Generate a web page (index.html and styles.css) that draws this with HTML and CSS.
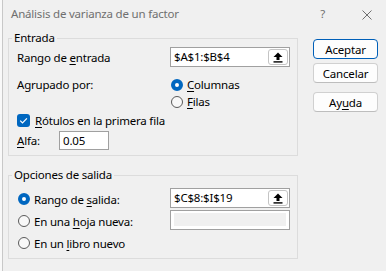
FILE: index.html
```html
<!DOCTYPE html>
<html lang="es">

<head>
    <meta charset="UTF-8">
    <title>Análisis de varianza de un factor</title>
    <link rel="stylesheet" href="styles.css">
</head>

<body>
    <div class="dialog">
        <div class="titlebar">
            <span class="title">Análisis de varianza de un factor</span>
            <span class="help">?</span>
            <svg class="close" width="10" height="10" viewBox="0 0 10 10">
                <path d="M0.5 0.5 L9.5 9.5 M9.5 0.5 L0.5 9.5" stroke="#6f6f6f" stroke-width="1" fill="none" />
            </svg>
        </div>

        <div class="content">
            <div class="groups">
                <fieldset class="group entrada">
                    <legend>Entrada</legend>
                    <div class="row">
                        <span class="label">Rango de <u>e</u>ntrada</span>
                        <div class="ref-input">
                            <span class="value">$A$1:$B$4</span>
                            <button class="pick">
                                <svg width="10" height="11" viewBox="0 0 10 11">
                                    <polygon points="5,0.5 9.5,5 0.5,5" fill="#000" />
                                    <rect x="3.5" y="5" width="3" height="3" fill="#000" />
                                    <rect x="0.5" y="9.2" width="9" height="1.4" fill="#000" />
                                </svg>
                            </button>
                        </div>
                    </div>

                    <div class="grouped">
                        <span class="label">Agrupado por:</span>
                        <div class="radios">
                            <label class="radio"><span class="dot checked"></span><span><u>C</u>olumnas</span></label>
                            <label class="radio"><span class="dot"></span><span><u>F</u>ilas</span></label>
                        </div>
                    </div>

                    <label class="check">
                        <span class="box">
                            <svg width="13" height="13" viewBox="0 0 13 13">
                                <path d="M3.2 6.7 L5.5 9 L9.9 4.3" stroke="#fff" stroke-width="1.2" fill="none" />
                            </svg>
                        </span>
                        <span><u>R</u>ótulos en la primera fila</span>
                    </label>

                    <div class="alpha">
                        <span class="alpha-label"><u>A</u>lfa:</span>
                        <div class="text-input">0.05</div>
                    </div>
                </fieldset>

                <fieldset class="group salida">
                    <legend>Opciones de salida</legend>
                    <div class="out-row">
                        <label class="radio wide"><span class="dot checked"></span><span>Rango de <u>s</u>alida:</span></label>
                        <div class="ref-input">
                            <span class="value">$C$8:$I$19</span>
                            <button class="pick">
                                <svg width="10" height="11" viewBox="0 0 10 11">
                                    <polygon points="5,0.5 9.5,5 0.5,5" fill="#000" />
                                    <rect x="3.5" y="5" width="3" height="3" fill="#000" />
                                    <rect x="0.5" y="9.2" width="9" height="1.4" fill="#000" />
                                </svg>
                            </button>
                        </div>
                    </div>
                    <div class="out-row">
                        <label class="radio wide"><span class="dot"></span><span>En una <u>h</u>oja nueva:</span></label>
                        <div class="ref-input disabled"><span class="inner"></span></div>
                    </div>
                    <div class="out-row">
                        <label class="radio wide"><span class="dot"></span><span>En un <u>l</u>ibro nuevo</span></label>
                    </div>
                </fieldset>
            </div>

            <div class="buttons">
                <button class="btn default">Aceptar</button>
                <button class="btn">Cancelar</button>
                <button class="btn help-btn">Ay<u>u</u>da</button>
            </div>
        </div>
    </div>
</body>

</html>
```

FILE: styles.css
```css
body {
    margin: 0;
    background-color: #f9f9f9;
    font-family: "Noto Sans", "Open Sans", sans-serif;
    font-size: 11.5px;
    letter-spacing: -0.2px;
    color: #000;
}

u {
    text-underline-offset: 2px;
}

.dialog {
    margin-left: 2px;
    border-left: 1px solid #c8c8c8;
    background-color: #f0f0f0;
    height: 271px;
    box-sizing: border-box;
    padding-left: 5px;
}

/* barra de título */
.titlebar {
    height: 30px;
    box-sizing: border-box;
    display: flex;
    align-items: flex-start;
    padding: 6px 0 0 3px;
    line-height: 16px;
    color: #6f6f6f;
}

.titlebar .title {
    flex: 1;
}

.titlebar .help {
    margin-right: 37px;
}

.titlebar .close {
    margin: 4px 14px 0 0;
}

.content {
    display: flex;
}

.groups {
    width: 290px;
}

.group {
    margin: 0;
    border: 1px solid #dcdcdc;
    padding: 1px 7px 5px 8px;
    min-width: 0;
}

.group legend {
    padding: 0 2px;
    margin-left: -5px;
    line-height: 16px;
}

.salida {
    margin-top: 11px;
    padding-top: 5px;
    padding-bottom: 4px;
}

.row {
    display: flex;
    align-items: center;
    height: 20px;
}

.label {
    width: 153px;
    flex-shrink: 0;
}

/* campo de referencia con botón */
.ref-input {
    width: 120px;
    height: 20px;
    box-sizing: border-box;
    border: 1px solid #a0a0a0;
    background-color: #fff;
    display: flex;
    align-items: center;
    padding-left: 3px;
}

.ref-input .value {
    flex: 1;
    line-height: 16px;
}

.ref-input.disabled {
    padding: 2px 3px 3px 3px;
    align-items: stretch;
}

.ref-input .inner {
    flex: 1;
    background-color: #f0f0f0;
}

.pick {
    width: 20px;
    height: 16px;
    margin-right: 1px;
    padding: 0;
    border: 1px solid #c4c4c4;
    border-radius: 3px;
    background-color: #fff;
    display: flex;
    align-items: center;
    justify-content: center;
}

.grouped {
    display: flex;
    margin-top: 9px;
    line-height: 17px;
}

.radios {
    display: flex;
    flex-direction: column;
}

.radio {
    display: flex;
    align-items: center;
    height: 17px;
}

.radio.wide {
    width: 153px;
    flex-shrink: 0;
    height: 22px;
}

.dot {
    width: 12px;
    height: 12px;
    box-sizing: border-box;
    border-radius: 50%;
    border: 1px solid #5a5a5a;
    background-color: #f8f8f8;
    margin: 0 4px 0 1px;
}

.dot.checked {
    border: 4px solid #0067c0;
    background-color: #fff;
}

.check {
    display: flex;
    align-items: center;
    height: 17px;
    margin-top: 2px;
}

.check .box {
    width: 13px;
    height: 13px;
    border-radius: 3px;
    background-color: #0067c0;
    margin-right: 5px;
    display: flex;
}

.alpha {
    display: flex;
    align-items: center;
    margin-top: 2px;
    height: 19px;
}

.alpha-label {
    width: 42px;
}

.text-input {
    width: 50px;
    height: 19px;
    box-sizing: border-box;
    border: 1px solid #a0a0a0;
    background-color: #fff;
    padding-left: 3px;
    line-height: 17px;
}

.out-row {
    display: flex;
    align-items: flex-start;
    height: 22px;
}

/* botones de la derecha */
.buttons {
    display: flex;
    flex-direction: column;
    width: 65px;
    margin: 9px 0 0 15px;
}

.btn {
    height: 20px;
    margin-bottom: 4px;
    padding: 0;
    border: 1px solid #d0d0d0;
    border-bottom-color: #bdbdbd;
    border-radius: 4px;
    background-color: #fdfdfd;
    font-family: inherit;
    font-size: 11.5px;
    letter-spacing: -0.2px;
    color: #000;
}

.btn.default {
    border-color: #005fb8;
}

.btn.help-btn {
    margin-top: 5px;
}
```
